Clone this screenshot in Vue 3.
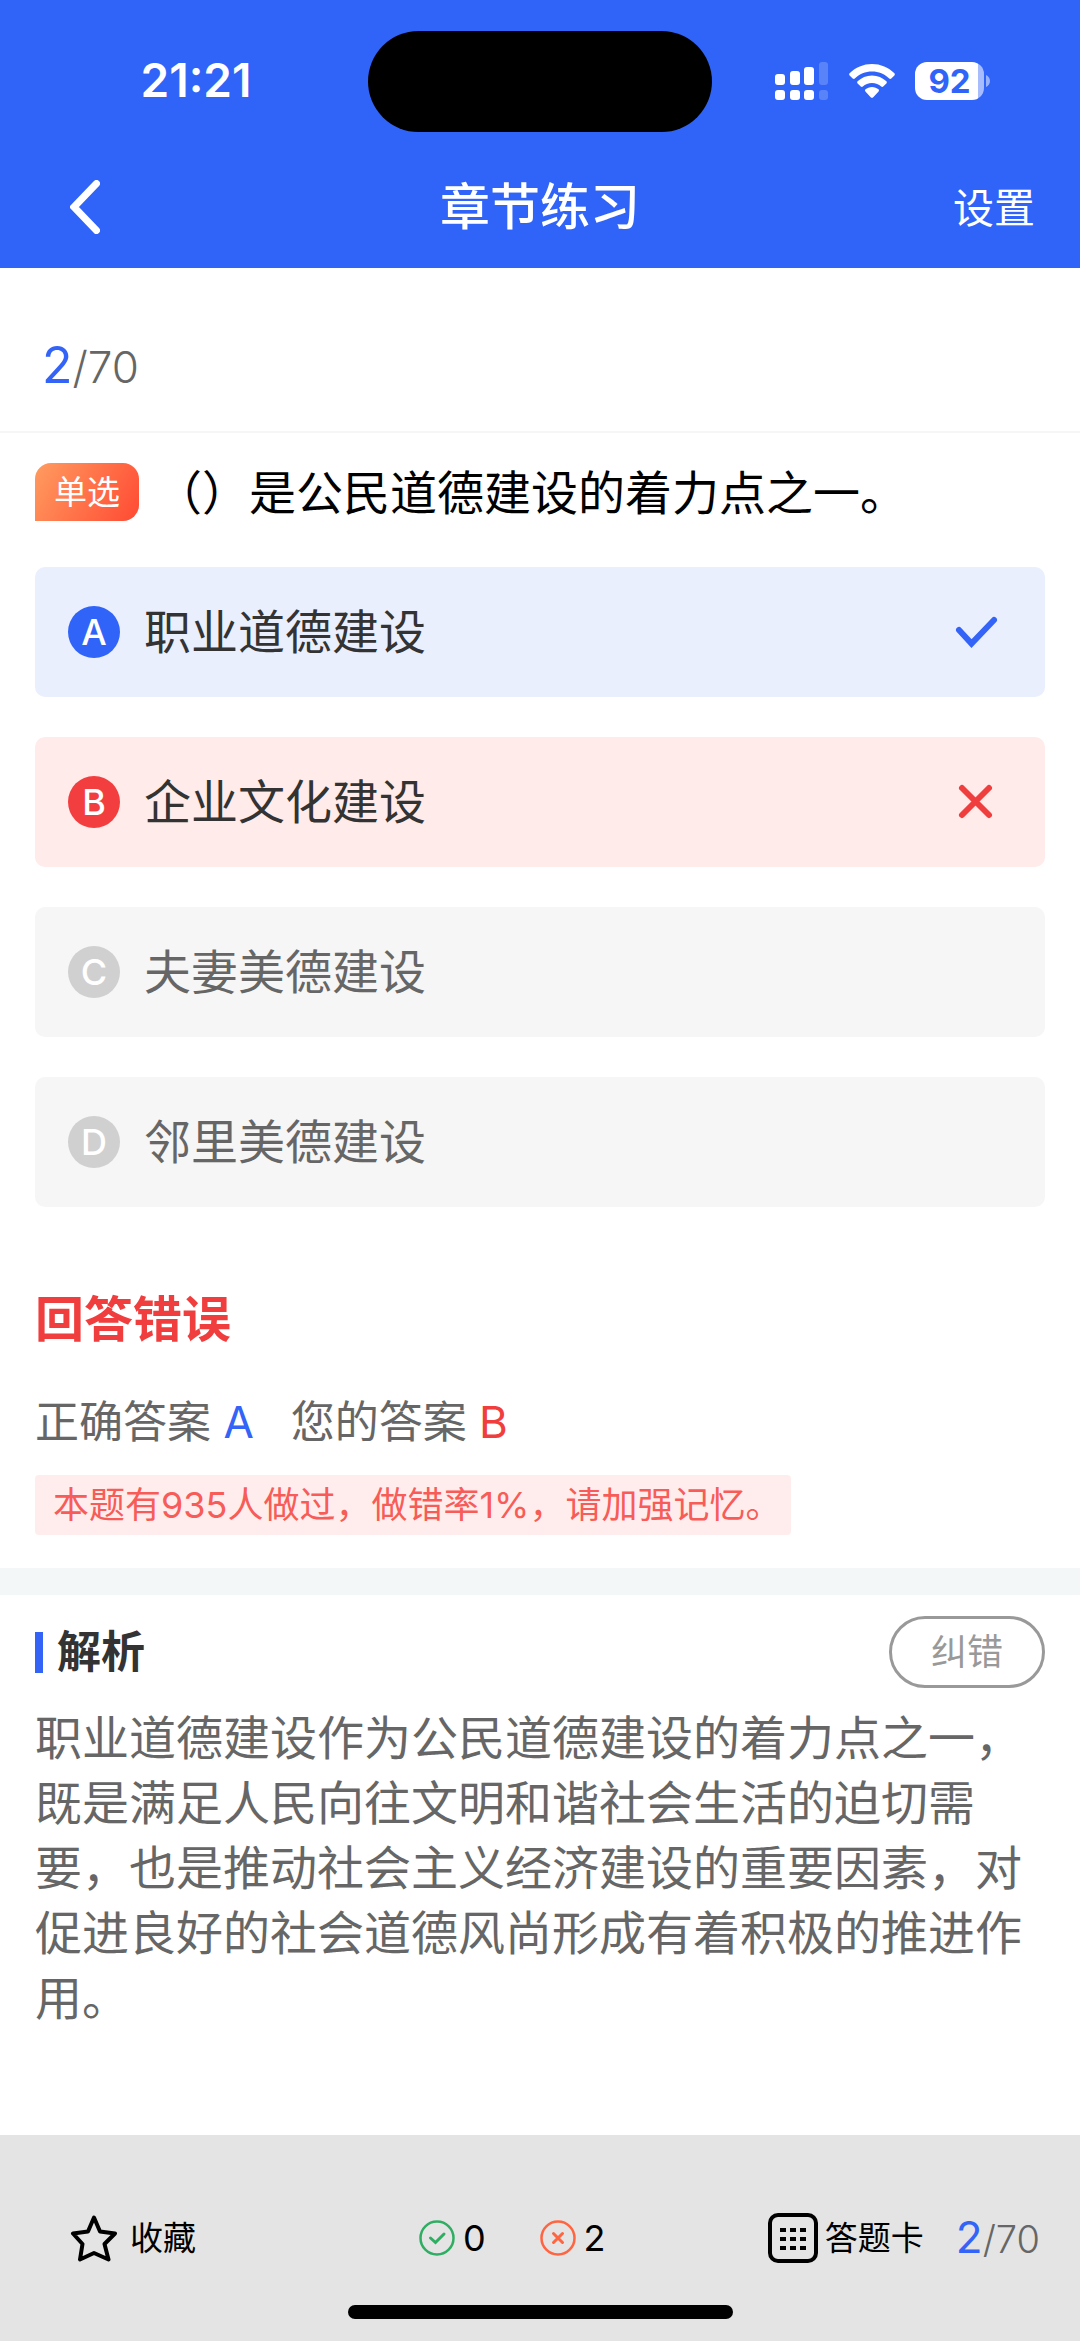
<script setup>
import { ref } from 'vue'

const current = ref(2)
const total = ref(70)

const options = ref([
  { key: 'A', text: '职业道德建设', state: 'correct' },
  { key: 'B', text: '企业文化建设', state: 'wrong' },
  { key: 'C', text: '夫妻美德建设', state: 'idle' },
  { key: 'D', text: '邻里美德建设', state: 'idle' },
])
</script>

<template>
  <div class="page" lang="zh-CN">
    <header class="header">
      <div class="status">
        <time class="clock">21:21</time>
        <div class="island"></div>
        <div class="indicators">
          <svg class="signal" width="54" height="38" viewBox="0 0 54 38" fill="#fff" aria-hidden="true">
            <rect x="0" y="12" width="10" height="11" rx="3" />
            <rect x="15" y="9" width="10" height="14" rx="3" />
            <rect x="29" y="5" width="10" height="18" rx="3" />
            <rect x="44" y="0" width="9" height="23" rx="3" opacity=".2" />
            <rect x="0" y="28" width="10" height="10" rx="3" />
            <rect x="15" y="28" width="10" height="10" rx="3" />
            <rect x="29" y="28" width="10" height="10" rx="3" />
            <rect x="44" y="28" width="9" height="10" rx="3" opacity=".2" />
          </svg>
          <svg class="wifi" width="46" height="34" viewBox="0 0 46 34" fill="#fff" aria-hidden="true">
            <path d="M.6 9.3C6.500 3.400 14.400 0 23 0s16.500 3.400 22.400 9.300c.6.600.6 1.500 0 2.100l-3.100 3.200c-.6.600-1.500.6-2.100 0C35.700 10.200 29.600 7.600 23 7.600S10.300 10.200 5.800 14.600c-.6.600-1.500.6-2.100 0L.6 11.400c-.6-.6-.6-1.500 0-2.100z" />
            <path d="M8.600 17.300C12.400 13.600 17.400 11.400 23 11.400s10.600 2.200 14.400 5.900c.6.600.6 1.500 0 2.100l-3.200 3.200c-.5.500-1.400.6-2 0-2.400-2.200-5.600-3.600-9.200-3.600s-6.800 1.400-9.200 3.600c-.6.600-1.500.5-2 0l-3.200-3.200c-.6-.6-.6-1.500 0-2.100z" />
            <path d="M16.500 25.300c1.700-1.500 4-2.400 6.500-2.400s4.800.9 6.500 2.400c.6.600.7 1.500.1 2.100l-5.600 6c-.6.600-1.500.6-2.100 0l-5.500-6c-.6-.6-.5-1.500.1-2.100z" />
          </svg>
          <div class="battery">
            <span class="battery-level">92</span>
            <svg class="battery-nub" width="4" height="12" viewBox="0 0 4 12" aria-hidden="true">
              <path d="M0 0c2.500 1.200 4 3.400 4 6s-1.500 4.800-4 6z" fill="#fff" opacity=".5" />
            </svg>
          </div>
        </div>
      </div>
      <nav class="nav">
        <button class="back" type="button" aria-label="返回">
          <svg width="30" height="54" viewBox="0 0 30 54" fill="none" stroke="#fff" stroke-width="7" stroke-linecap="round" stroke-linejoin="miter" aria-hidden="true">
            <path d="M26.500 3.500 4 27 26.500 50.500" />
          </svg>
        </button>
        <h1 class="nav-title">章节练习</h1>
        <button class="settings" type="button">设置</button>
      </nav>
    </header>

    <main class="main">
      <div class="progress">
        <p class="count"><b>{{ current }}</b>/{{ total }}</p>
      </div>

      <section class="quiz">
        <div class="question">
          <span class="tag">单选</span>
          <h2 class="stem">（）是公民道德建设的着力点之一。</h2>
        </div>

        <div class="options">
          <button v-for="o in options" :key="o.key" type="button" class="option" :class="o.state">
            <span class="badge">{{ o.key }}</span>
            <span class="option-text">{{ o.text }}</span>
            <svg v-if="o.state === 'correct'" class="mark" width="44" height="44" viewBox="0 0 44 44" fill="none" stroke="#3363f7" stroke-width="6" stroke-linecap="round" aria-hidden="true">
              <path d="M4 20 16.500 33.500 39 10" />
            </svg>
            <svg v-else-if="o.state === 'wrong'" class="mark" width="44" height="44" viewBox="0 0 44 44" fill="none" stroke="#f03e3e" stroke-width="6" stroke-linecap="round" aria-hidden="true">
              <path d="M7 8 34 35M34 8 7 35" />
            </svg>
          </button>
        </div>

        <h2 class="verdict">回答错误</h2>
        <p class="answers">
          <span>正确答案 <b class="blue">A</b></span>
          <span>您的答案 <b class="red">B</b></span>
        </p>
        <p class="notice">本题有935人做过，做错率1%，请加强记忆。</p>
      </section>

      <section class="analysis">
        <div class="analysis-head">
          <h2 class="analysis-title">解析</h2>
          <button class="report" type="button">纠错</button>
        </div>
        <p class="analysis-text">职业道德建设作为公民道德建设的着力点之一，既是满足人民向往文明和谐社会生活的迫切需要，也是推动社会主义经济建设的重要因素，对促进良好的社会道德风尚形成有着积极的推进作用。</p>
      </section>
    </main>

    <footer class="footer">
      <div class="tools">
        <button class="tool favorite" type="button">
          <svg width="48" height="48" viewBox="0 0 48 48" fill="none" stroke="#000" stroke-width="4" stroke-linejoin="round" aria-hidden="true">
            <path d="M24 3.500 30 17.500 45 19.500 34.500 30 38.500 45.500 24 39 10 45.500 12.500 30 3 19.500 18 17.500z" />
          </svg>
          <span>收藏</span>
        </button>
        <div class="scores">
          <span class="score">
            <svg width="36" height="36" viewBox="0 0 36 36" fill="none" stroke="#2fae63" aria-hidden="true">
              <circle cx="18" cy="18" r="16.500" stroke-width="2.500" />
              <path d="M11.500 18 16.500 22.500 25 14" stroke-width="3" stroke-linecap="round" />
            </svg>
            <span>0</span>
          </span>
          <span class="score">
            <svg width="36" height="36" viewBox="0 0 36 36" fill="none" stroke="#ff6540" aria-hidden="true">
              <circle cx="18" cy="18" r="16.500" stroke-width="2.500" />
              <path d="M13.500 13.500 22.500 22.500M22.500 13.500 13.500 22.500" stroke-width="3" stroke-linecap="round" />
            </svg>
            <span>2</span>
          </span>
        </div>
        <button class="tool sheet" type="button">
          <svg width="50" height="50" viewBox="0 0 50 50" aria-hidden="true">
            <rect x="2" y="2" width="46" height="46" rx="8" fill="none" stroke="#000" stroke-width="4" />
            <path d="M12 15h6v4h-6zM22 15h6v4h-6zM32 15h6v4h-6zM12 24h6v4h-6zM22 24h6v4h-6zM32 24h6v4h-6zM12 33h6v4h-6zM22 33h6v4h-6zM32 33h6v4h-6z" />
          </svg>
          <span>答题卡</span>
          <span class="count small"><b>{{ current }}</b>/{{ total }}</span>
        </button>
      </div>
      <div class="home-bar"></div>
    </footer>
  </div>
</template>

<style>
body {
  margin: 0;
  background: #fff;
}
</style>

<style scoped>
.page {
  display: flex;
  flex-direction: column;
  min-height: 100vh;
  background: #fff;
  color: #333;
  font-family: Inter, "Noto Sans CJK SC", sans-serif;
  text-spacing-trim: space-all;
}

h1, h2, p {
  margin: 0;
  font-weight: 400;
}

b {
  font-weight: inherit;
}

button {
  margin: 0;
  padding: 0;
  border: 0;
  background: none;
  color: inherit;
  font: inherit;
  cursor: pointer;
}

svg {
  display: block;
  flex: none;
}

/* Header */
.header {
  background: #3064f8;
  color: #fff;
}

.status {
  display: grid;
  grid-template-columns: 1fr 344px 1fr;
  align-items: center;
  padding-top: 31px;
}

.clock {
  padding: 0 0 3px 24px;
  text-align: center;
  font-size: 46px;
  line-height: 60px;
  font-weight: 600;
}

.island {
  height: 101px;
  border-radius: 51px;
  background: #000;
}

.indicators {
  display: flex;
  align-items: center;
  gap: 20px;
  padding: 0 0 2px 63px;
}

.battery {
  display: flex;
  align-items: center;
  gap: 2px;
}

.battery-level {
  width: 69px;
  border-radius: 12px;
  background: linear-gradient(90deg, #fff 63px, #a6bcfc 63px);
  color: #3064f8;
  font-size: 33px;
  line-height: 38px;
  font-weight: 700;
  text-align: center;
}

.nav {
  display: grid;
  grid-template-columns: 1fr auto 1fr;
  align-items: center;
  height: 122px;
  padding: 14px 45px 0;
}

.back {
  justify-self: start;
  padding: 10px 25px;
}

.nav-title {
  font-size: 50px;
  line-height: 60px;
  font-weight: 500;
}

.settings {
  justify-self: end;
  padding-top: 2px;
  font-size: 41px;
  line-height: 60px;
}

/* Question */
.main {
  flex: 1;
}

.progress {
  padding: 67px 42px 34px;
  border-bottom: 2px solid #f6f6f6;
}

.count {
  color: #666;
  font-size: 44px;
  line-height: 60px;
  font-weight: 300;
}

.count b {
  color: #3363f7;
  font-size: 50px;
  font-weight: 400;
}

.quiz {
  padding: 30px 35px 33px;
}

.question {
  display: flex;
  align-items: flex-start;
  gap: 16px;
}

.tag {
  flex: none;
  padding: 0 19px;
  border-radius: 16px 16px 16px 0;
  background: linear-gradient(120deg, #ff9c60, #ff4a33);
  color: #fff;
  font-size: 33px;
  line-height: 58px;
}

.stem {
  color: #000;
  font-size: 47px;
  line-height: 60px;
}

.options {
  display: flex;
  flex-direction: column;
  gap: 40px;
  margin-top: 44px;
}

.option {
  display: flex;
  align-items: center;
  gap: 24px;
  min-height: 130px;
  padding: 0 46px 0 33px;
  border-radius: 10px;
  background: #f6f6f6;
  color: #666;
  font-size: 47px;
  line-height: 60px;
  text-align: left;
}

.badge {
  flex: none;
  width: 52px;
  border-radius: 50%;
  background: #d1d0d1;
  color: #fff;
  font-size: 36px;
  line-height: 52px;
  font-weight: 500;
  text-align: center;
}

.option-text {
  flex: 1;
}

.correct {
  background: #eaeffe;
  color: #333;
}

.correct .badge {
  background: #3064f8;
}

.wrong {
  background: #feebea;
  color: #333;
}

.wrong .badge {
  background: #f33e40;
}

/* Result */
.verdict {
  margin-top: 83px;
  color: #f03e3e;
  font-size: 49px;
  line-height: 60px;
  font-weight: 700;
}

.answers {
  display: flex;
  gap: 37px;
  margin-top: 42px;
  color: #666;
  font-size: 44px;
  line-height: 60px;
}

.blue {
  color: #3363f7;
}

.red {
  color: #f03e3e;
}

.notice {
  width: fit-content;
  margin-top: 23px;
  padding: 0 10px 0 18px;
  border-radius: 4px;
  background: #ffeded;
  color: #f75c58;
  font-size: 36px;
  line-height: 60px;
}

/* Analysis */
.analysis {
  padding: 21px 35px 60px;
  border-top: 27px solid #f3f7f8;
}

.analysis-head {
  display: flex;
  align-items: center;
  justify-content: space-between;
}

.analysis-title {
  padding-left: 14px;
  border-left: 8px solid #3363f7;
  font-size: 44px;
  line-height: 41px;
  font-weight: 700;
}

.report {
  box-sizing: border-box;
  width: 156px;
  border: 3px solid #999;
  border-radius: 36px;
  color: #999;
  font-size: 36px;
  line-height: 66px;
}

.analysis-text {
  margin-top: 17px;
  color: #666;
  font-size: 47px;
  line-height: 65px;
}

/* Footer */
.footer {
  padding: 71px 0 22px;
  background: #e4e4e4;
  color: #000;
}

.tools {
  display: grid;
  grid-template-columns: 1fr 1fr auto;
  align-items: center;
  height: 64px;
  padding: 0 40px 0 70px;
}

.tool {
  display: flex;
  align-items: center;
  font-size: 33px;
  line-height: 60px;
}

.favorite {
  gap: 12px;
}

.scores {
  display: flex;
  gap: 54px;
}

.score {
  display: flex;
  align-items: center;
  gap: 8px;
  font-size: 36px;
  line-height: 60px;
}

.sheet {
  gap: 7px;
}

.small {
  margin-left: 25px;
  font-size: 38px;
}

.small b {
  font-size: 44px;
}

.home-bar {
  width: 385px;
  height: 14px;
  margin: 35px auto 0;
  border-radius: 7px;
  background: #000;
}
</style>
